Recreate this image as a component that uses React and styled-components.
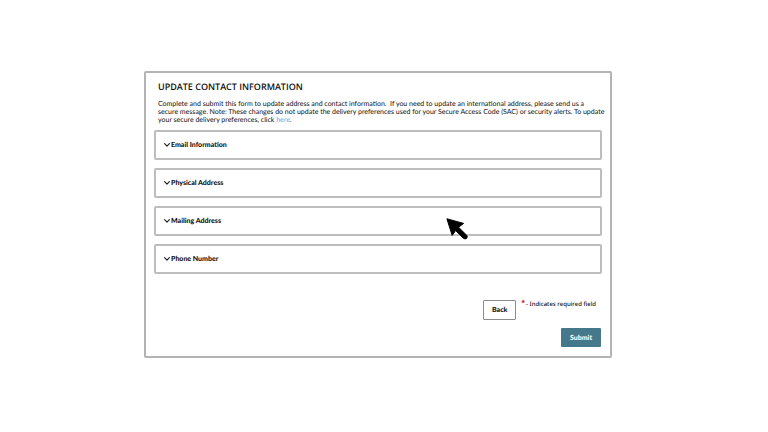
import React, { useState } from "react";
import styled, { createGlobalStyle } from "styled-components";

const GlobalStyle = createGlobalStyle`
  * { box-sizing: border-box; }
  body {
    margin: 0;
    background: #ffffff;
    color: #111111;
    font-family: "Open Sans", "Noto Sans", sans-serif;
    text-rendering: geometricPrecision;
  }
`;

const Page = styled.main`
  padding: 71px 156px 71px 144px;
`;

const Panel = styled.form`
  position: relative;
  padding: 8px;
  border: 2px solid #b3b3b3;
  border-radius: 2px;
`;

const Intro = styled.header`
  margin-right: -6px;
  padding: 0 0 6px 4px;
`;

const Title = styled.h1`
  margin: 0 0 7px;
  font-size: 9px;
  line-height: 12px;
  font-weight: 600;
`;

const Text = styled.p`
  margin: 0;
  font: 400 7px/8px Lato, "Open Sans", sans-serif;
  white-space: pre-wrap;
`;

const Link = styled.a`
  color: #45b8e6;
  text-decoration: none;
`;

const Sections = styled.div`
  display: flex;
  flex-direction: column;
  gap: 8px;
`;

const SectionButton = styled.button`
  display: flex;
  align-items: center;
  gap: 1px;
  width: 100%;
  height: 30px;
  padding: 0 8px;
  border: 2px solid #bdbdbd;
  border-radius: 2px;
  background: #ffffff;
  color: #111111;
  font: 900 7px/10px Lato, "Open Sans", sans-serif;
  text-rendering: inherit;
  text-align: left;
`;

const ChevronIcon = styled.svg`
  width: 6px;
  height: 6px;
  fill: none;
  stroke: #1c1c1c;
  stroke-width: 1.1;
  stroke-linecap: round;
  stroke-linejoin: round;
`;

const Footer = styled.footer`
  display: flex;
  flex-direction: column;
  align-items: flex-end;
  gap: 8px;
  padding: 26px 1px 1px;
`;

const FooterRow = styled.div`
  display: flex;
  align-items: flex-start;
  gap: 5px;
  padding-right: 5px;
`;

const Note = styled.p`
  display: flex;
  gap: 1px;
  margin: 0;
  font: 500 6px/8px "Noto Sans", "Open Sans", sans-serif;
`;

const Button = styled.button`
  width: ${(p) => (p.$primary ? "40px" : "33px")};
  height: ${(p) => (p.$primary ? "19px" : "20px")};
  padding: 0;
  border: ${(p) => (p.$primary ? "0" : "1px solid #8c8c8c")};
  border-radius: 1px;
  background: ${(p) => (p.$primary ? "#46788c" : "#ffffff")};
  color: ${(p) => (p.$primary ? "#ffffff" : "#111111")};
  font: 900 7px/10px Lato, "Open Sans", sans-serif;
  text-rendering: inherit;
`;

const Asterisk = styled.span`
  color: #c8202f;
  font-size: 7px;
  font-weight: 700;
`;

const Pointer = styled.svg`
  position: absolute;
  top: 145px;
  left: 300px;
  width: 23px;
  height: 23px;
  pointer-events: none;
`;

const SECTIONS = ["Email Information", "Physical Address", "Mailing Address", "Phone Number"];

function Section({ label }) {
  const [open, setOpen] = useState(false);
  return (
    <SectionButton type="button" aria-expanded={open} onClick={() => setOpen(!open)}>
      <ChevronIcon viewBox="0 0 6 6" aria-hidden="true">
        <path d="M0.6 1.7 3 4.2 5.4 1.7" />
      </ChevronIcon>
      {label}
    </SectionButton>
  );
}

export default function App() {
  return (
    <>
      <GlobalStyle />
      <Page>
        <Panel onSubmit={(e) => e.preventDefault()}>
          <Intro>
            <Title>UPDATE CONTACT INFORMATION</Title>
            <Text>
              {"Complete and submit this form to update address and contact information.  If you need to update an international address, please send us a\nsecure message. Note: These changes do not update the delivery preferences used for your Secure Access Code (SAC) or security alerts. To update\nyour secure delivery preferences, click "}
              <Link href="#preferences">here</Link>.
            </Text>
          </Intro>
          <Sections>
            {SECTIONS.map((label) => (
              <Section key={label} label={label} />
            ))}
          </Sections>
          <Footer>
            <FooterRow>
              <Button type="button">Back</Button>
              <Note>
                <Asterisk>*</Asterisk>
                <span>- Indicates required field</span>
              </Note>
            </FooterRow>
            <Button type="submit" $primary>Submit</Button>
          </Footer>
          <Pointer viewBox="0 0 23 23" aria-hidden="true">
            <path
              d="M0.9 0.8 17.6 5.4 12.6 9.3 20.6 17.2 Q22 19 20.6 20.4 Q19 21.5 17.3 20.2 L9.6 12.6 6.2 17.4Z"
              fill="#000000"
              stroke="#000000"
              strokeWidth="1"
              strokeLinejoin="round"
            />
          </Pointer>
        </Panel>
      </Page>
    </>
  );
}
